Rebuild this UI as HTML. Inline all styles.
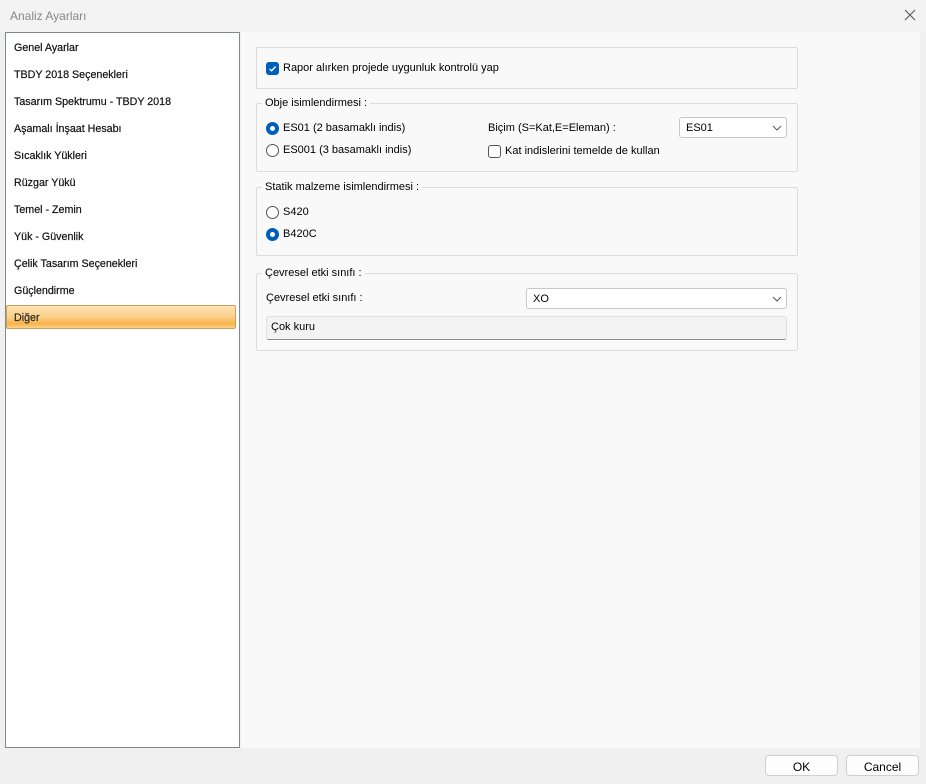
<!DOCTYPE html>
<html><head><meta charset="utf-8"><style>
*{margin:0;padding:0;box-sizing:border-box}
body{width:926px;height:784px;background:#f0f0f0;font-family:"Liberation Sans",sans-serif;font-size:11px;color:#000;position:relative;overflow:hidden}
.a{position:absolute;white-space:nowrap}
.title{left:0;top:0;width:926px;height:32px;background:#f3f3f3}
.left{left:5px;top:32px;width:235px;height:716px;background:#fff;border:1px solid #828790}
.right{left:241px;top:32px;width:680px;height:716px;background:#f9f9f9}
.it{left:14px;font-size:10.7px;color:#111;-webkit-text-stroke:0.2px #111}
.gb{border:1px solid #dcdcdc;border-radius:2px}
.lg{background:#f9f9f9;padding:0 3px}
.rad{width:13px;height:13px;border-radius:50%;border:1px solid #555;background:#fff}
.rad.on{border:4px solid #005fb8;background:#fff}
.cb{width:13px;height:13px;border-radius:3px;border:1px solid #555;background:#fff}
.dd{background:#fff;border:1px solid #c8c8c8;border-radius:3px;height:21px;padding:4px 0 0 6px}
.btn{background:#fdfdfd;border:1px solid #d0d0d0;border-radius:4px;height:21px;text-align:center;padding-top:4px;font-size:12px}
</style></head><body>
<div class="a title"></div>
<div class="a" style="left:10px;top:9px;font-size:12px;color:#888">Analiz Ayarları</div>
<svg class="a" style="left:904px;top:9px" width="12" height="12"><path d="M1 1L11 11M11 1L1 11" stroke="#555" stroke-width="1.1"/></svg>
<div class="a left"></div>
<div class="a it" style="top:42px">Genel Ayarlar</div>
<div class="a it" style="top:69px">TBDY 2018 Seçenekleri</div>
<div class="a it" style="top:96px">Tasarım Spektrumu - TBDY 2018</div>
<div class="a it" style="top:123px">Aşamalı İnşaat Hesabı</div>
<div class="a it" style="top:150px">Sıcaklık Yükleri</div>
<div class="a it" style="top:177px">Rüzgar Yükü</div>
<div class="a it" style="top:204px">Temel - Zemin</div>
<div class="a it" style="top:231px">Yük - Güvenlik</div>
<div class="a it" style="top:258px">Çelik Tasarım Seçenekleri</div>
<div class="a it" style="top:285px">Güçlendirme</div>
<div class="a" style="left:6px;top:305px;width:230px;height:24px;border:1px solid #c9a15a;border-radius:2px;background:linear-gradient(#fde3b4,#fbd08a 50%,#f9b34a 80%,#fbd28a)"></div>
<div class="a it" style="top:312px;color:#333">Diğer</div>
<div class="a right"></div>
<div class="a" style="left:920px;top:32px;width:6px;height:716px;background:#f0f0f0"></div>

<div class="a gb" style="left:256px;top:47px;width:542px;height:42px"></div>
<div class="a" style="left:266px;top:62px;width:13px;height:13px;border-radius:3px;background:#005fb8"></div>
<svg class="a" style="left:266px;top:62px" width="13" height="13"><path d="M3.5 6.8L5.6 8.8L9.6 4.5" stroke="#fff" stroke-width="1.3" fill="none"/></svg>
<div class="a" style="left:283px;top:62px">Rapor alırken projede uygunluk kontrolü yap</div>

<div class="a gb" style="left:256px;top:103px;width:542px;height:69px"></div>
<div class="a lg" style="left:262px;top:97px">Obje isimlendirmesi :</div>
<div class="a rad on" style="left:266px;top:122px"></div>
<div class="a" style="left:283px;top:122px">ES01 (2 basamaklı indis)</div>
<div class="a rad" style="left:266px;top:144px"></div>
<div class="a" style="left:283px;top:144px">ES001 (3 basamaklı indis)</div>
<div class="a" style="left:488px;top:122px">Biçim (S=Kat,E=Eleman) :</div>
<div class="a dd" style="left:679px;top:117px;width:108px">ES01</div>
<svg class="a" style="left:772px;top:125px" width="10" height="6"><path d="M1 1L5 5L9 1" stroke="#555" fill="none"/></svg>
<div class="a cb" style="left:488px;top:145px"></div>
<div class="a" style="left:505px;top:145px">Kat indislerini temelde de kullan</div>

<div class="a gb" style="left:256px;top:187px;width:542px;height:69px"></div>
<div class="a lg" style="left:262px;top:181px">Statik malzeme isimlendirmesi :</div>
<div class="a rad" style="left:266px;top:206px"></div>
<div class="a" style="left:283px;top:206px">S420</div>
<div class="a rad on" style="left:266px;top:228px"></div>
<div class="a" style="left:283px;top:228px">B420C</div>

<div class="a gb" style="left:256px;top:273px;width:542px;height:78px"></div>
<div class="a lg" style="left:262px;top:267px">Çevresel etki sınıfı :</div>
<div class="a" style="left:266px;top:292px">Çevresel etki sınıfı :</div>
<div class="a dd" style="left:526px;top:288px;width:261px">XO</div>
<svg class="a" style="left:772px;top:296px" width="10" height="6"><path d="M1 1L5 5L9 1" stroke="#555" fill="none"/></svg>
<div class="a" style="left:266px;top:316px;width:521px;height:24px;background:#f3f3f3;border:1px solid #e0e0e0;border-bottom:1px solid #8a8a8a;border-radius:3px;padding:4px 0 0 4px">Çok kuru</div>

<div class="a btn" style="left:765px;top:755px;width:73px">OK</div>
<div class="a btn" style="left:846px;top:755px;width:73px">Cancel</div>
</body></html>
